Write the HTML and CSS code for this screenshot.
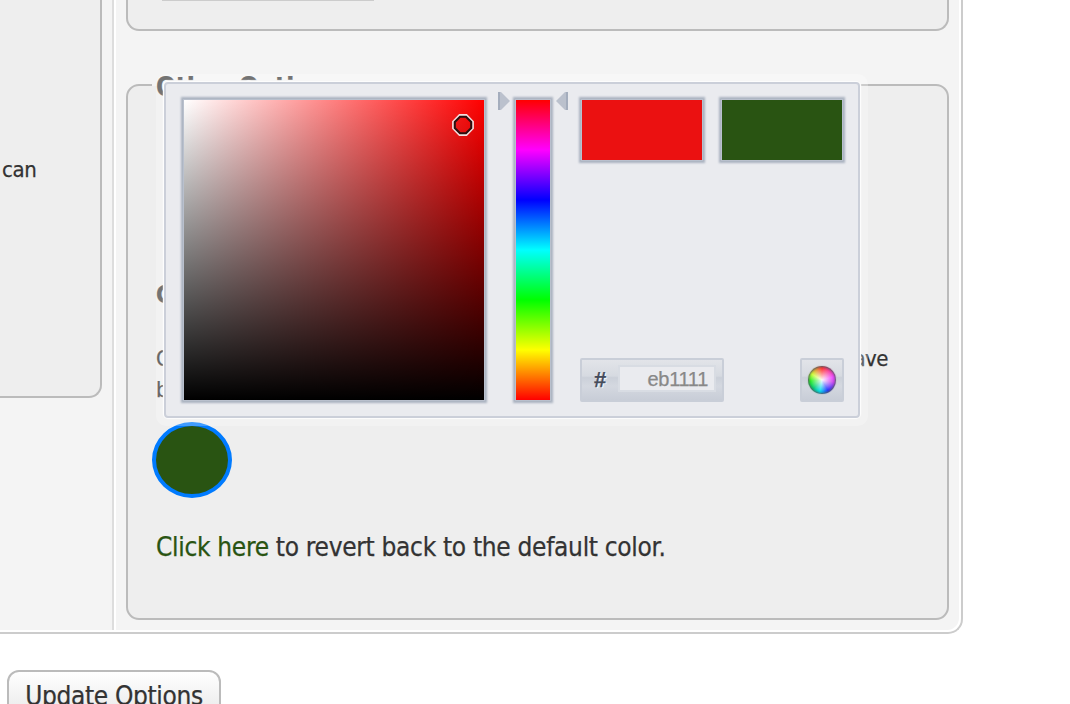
FILE: index.html
```
<!DOCTYPE html>
<html lang="en">
<head>
<meta charset="utf-8">
<title>Options</title>
<link rel="stylesheet" href="styles.css">
</head>
<body>
<div class="panel">
  <aside class="side"><div class="side-card"><p class="side-text">can</p></div></aside>
  <main class="content">
    <section class="card card-top"><div class="field"></div></section>
    <section class="card card-other">
      <h2 class="legend"><span>Other Options</span></h2>
      <h3 class="subhead">Color</h3>
      <div class="desc"><span>C</span><span>have</span></div>
      <div class="desc desc-last"><span>been</span></div>
      <button class="swatch" aria-label="Color"></button>
      <p class="revert"><a class="link">Click here</a> to revert back to the default color.</p>
    </section>
  </main>
</div>
<button class="update"><span>Update Options</span></button>

<div class="picker">
  <div class="picker-body">
    <div class="sat"><svg class="marker" width="24" height="24" viewBox="0 0 24 24" fill="none"><path d="M8.500 2h7L22 8.500v7L15.500 22h-7L2 15.500v-7z" stroke="#f4dede" stroke-width="1.800"/><path d="M9 3.800h6L20.200 9v6L15 20.200H9L3.800 15V9z" stroke="#2a1010" stroke-width="2"/></svg></div>
    <div class="hue-wrap">
      <svg class="arrow" width="12" height="18" viewBox="0 0 12 18"><path d="M0 0h3l9 9-9 9H0z" fill="#bbc1cd"/><path d="M0 0h2v18H0z" fill="#a4adbd"/></svg>
      <div class="hue"></div>
      <svg class="arrow" width="12" height="18" viewBox="0 0 12 18"><path d="M12 0H9L0 9l9 9h3z" fill="#bbc1cd"/><path d="M12 0h-2v18h2z" fill="#a4adbd"/></svg>
    </div>
    <div class="right">
      <div class="pair"><div class="chip chip-new"></div><div class="chip chip-old"></div></div>
      <div class="controls">
        <div class="hex"><b>#</b><span class="value">eb1111</span></div>
        <div class="submit"><i class="wheel"></i></div>
      </div>
    </div>
  </div>
</div>
</body>
</html>
```
FILE: styles.css
```
* { box-sizing: border-box; }
html { background: #fff; }
body { margin: 0; height: 704px; overflow: hidden; position: relative; font-family: "DejaVu Sans Condensed", "DejaVu Sans", sans-serif; font-stretch: condensed; color: #333; -webkit-text-stroke: .25px; }
h2, h3, p { margin: 0; }
.panel { display: flex; width: 963px; height: 634px; border: solid #ccc; border-width: 0 2px 2px 0; border-radius: 0 0 15px 0; padding: 0 2px 2px 0; }
.side { width: 114px; flex: none; background: #f4f4f4; border-right: 2px solid #ddd; }
.side-card { width: 102px; height: 398px; background: #eee; border: solid #bbb; border-width: 0 2px 2px 0; border-radius: 0 0 13px 0; padding: 156px 0 0 2px; }
.side-text { font-size: 22px; line-height: 28px; letter-spacing: -.4px; }
.content { flex: 1; margin-left: 2px; background: #f4f4f4; border-radius: 0 0 12px 0; padding: 0 10px; }
.card { width: 823px; background: #eee; border: 2px solid #bbb; border-radius: 13px; }
.card-top { height: 31px; border-top: 0; border-radius: 0 0 13px 13px; padding-left: 34px; }
.field { width: 212px; height: 1px; background: #ccc; }
.card-other { height: 536px; margin-top: 53px; padding: 0 28px; }
.legend { margin: -15px 0 0; height: 32px; font-size: 26px; line-height: 32px; color: #444; letter-spacing: -.1px; }
.legend span { display: inline-block; height: 32px; background: linear-gradient(#f4f4f4 0 15px, #eee 15px); margin-left: -4px; padding: 0 4px; }
.subhead { margin-top: 176px; font-size: 24px; line-height: 32px; color: #444; }
.desc { display: flex; justify-content: space-between; margin-top: 33px; width: 732px; font-size: 22px; line-height: 30px; letter-spacing: -.5px; }
.desc-last { margin-top: 1px; }
.swatch { display: block; width: 80px; height: 76px; margin: 17px 0 0 -4px; padding: 0; border: 4px solid #007bff; border-radius: 50%; background: #295412; }
.revert { margin-top: 33px; font-size: 26px; line-height: 32px; letter-spacing: -.31px; white-space: nowrap; }
.link { color: #295412; }
.update { display: block; width: 214px; height: 54px; margin: 36px 0 0 7px; padding: 0; border: 2px solid #bbb; border-radius: 12px; background: linear-gradient(#fff, #e6e6e6); font: inherit; font-size: 26px; line-height: 48px; letter-spacing: -.35px; color: #333; }
.update span { display: block; margin-top: -2px; }
.picker { position: absolute; left: 156px; top: 74px; width: 712px; height: 352px; padding: 8px; border-radius: 10px; background: rgba(255,255,255,.25); }
.picker-body { display: flex; width: 696px; height: 336px; padding: 15px 11px 11px 17px; background: #eaebef; border: 2px solid #cbcfd9; border-radius: 4px; box-shadow: 0 0 1px 1px rgba(255,255,255,.85), 0 -1px 1px 1px #f7f7f7; }
.sat, .hue, .chip { border: 1px solid #b9c0cd; box-shadow: 0 0 2px 2px #aab2c0; }
.sat { width: 302px; height: 302px; flex: none; background: linear-gradient(transparent, #000), linear-gradient(90deg, #fff, red); }
.marker { display: block; margin: 13px 0 0 267px; }
.hue-wrap { display: flex; margin-left: 13px; gap: 5px; flex: none; }
.arrow { margin-top: -7px; }
.hue { width: 36px; height: 302px; background: linear-gradient(red, #f0f 16.67%, blue 33.33%, cyan 50%, lime 66.67%, yellow 83.33%, red); }
.right { width: 264px; margin-left: 12px; flex: none; }
.pair { display: flex; gap: 18px; padding-left: 1px; }
.chip { width: 122px; height: 62px; }
.chip-new { background: #eb1111; }
.chip-old { background: #295412; }
.controls { display: flex; justify-content: space-between; margin-top: 197px; }
.hex, .submit { height: 44px; border: 2px solid #c9ced8; border-radius: 2px; background: linear-gradient(#e2e4e9, #d6dae1 40%, #cbd0d9 44%, #d4d8e0 65%, #c8cdd7); }
.hex { display: flex; align-items: center; width: 144px; font-family: "Liberation Sans", sans-serif; font-stretch: normal; }
.hex b { width: 36px; text-align: center; font-size: 22px; color: #454c5c; text-shadow: 1px 1px 1px #fff; }
.value { width: 98px; height: 27px; margin-top: -3px; padding-right: 6px; border: 2px solid #d8dce3; background: #eaebef; color: #888; font-size: 20px; line-height: 24px; text-align: right; letter-spacing: -.3px; }
.submit { width: 44px; display: flex; align-items: center; justify-content: center; }
.wheel { width: 28px; height: 28px; border-radius: 50%; background: radial-gradient(circle, rgba(255,255,255,.95), rgba(255,255,255,.35) 38%, transparent 60%), conic-gradient(#f33, #e4f 75deg, #c4e 100deg, #23f 150deg, #0de 190deg, #0c7 225deg, #2e2 265deg, #cf3 300deg, #f33); box-shadow: inset 0 0 2px 1px #525a62, 0 0 1px #777; }
```
